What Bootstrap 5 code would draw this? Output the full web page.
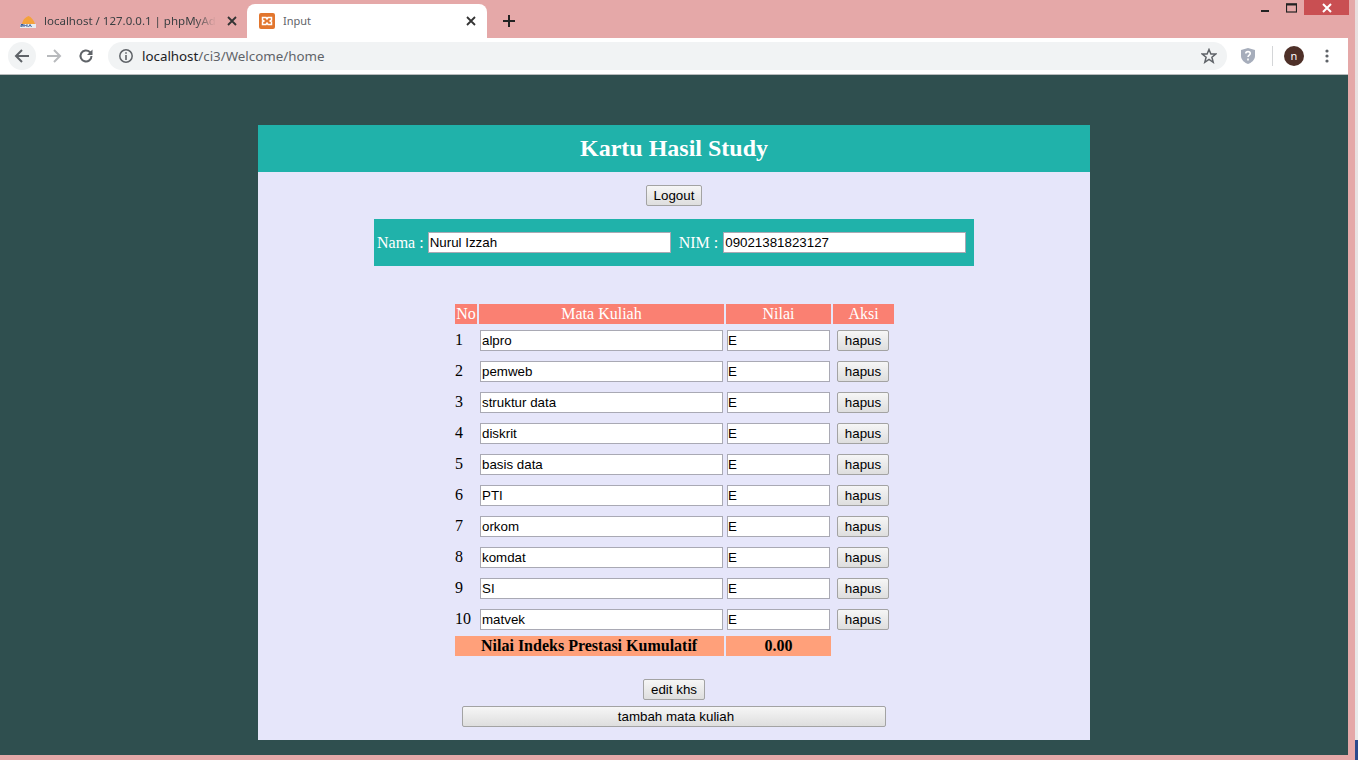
<!DOCTYPE html>
<html lang="id">
<head>
<meta charset="utf-8">
<title>Input</title>
<link href="https://cdn.jsdelivr.net/npm/bootstrap@5.3.0/dist/css/bootstrap.min.css" rel="stylesheet">
<style>
html,body{height:760px;overflow:hidden;background:#e5a8a8}
.shell{width:1358px;height:760px}
.win{width:1355px;height:760px;background:#e5a8a8}
.desk{width:3px;height:760px;background:linear-gradient(#e9dede 0,#e9e9e9 740px,#2b4a8c 740px)}
.tabstrip{height:38px;width:1348px;position:relative;font:11.5px "Noto Sans",sans-serif;color:#3c4043}
.tab-a{width:247px;padding:0 7px 1px 20px;height:34px;margin-top:4px}
.tab-b{width:240px;height:34px;margin-top:4px;padding:0 8px 1px 12px;background:#fff;border-radius:8px 8px 0 0}
.tab-title{flex:1;white-space:nowrap;overflow:hidden;margin-left:8px}
.tab-fade{-webkit-mask-image:linear-gradient(90deg,#000 88%,transparent)}
.tab-b .tab-title{color:#5f6368;font-size:11px}
.newtab{margin-left:13px;margin-top:4px}
.winctl{position:absolute;top:0;right:-1px;height:15px}
.winctl span{display:flex;align-items:center;justify-content:center;height:15px}
.w-close{width:45px;background:#c94f52}
.w-btn{width:26px}
.toolbar{height:37px;width:1348px;background:#fff;border-bottom:1px solid #b9bcbd;padding:4px 0 4px 8px}
.nav-round{width:28px;height:28px;border-radius:50%}
.nav-on{background:#f1f3f4}
.omni{width:1119px;height:28px;border-radius:14px;background:#f1f3f4;margin-left:8px;padding:0 10px;font:13.33px "Noto Sans",sans-serif;color:#202124}
.omni em{font-style:normal;color:#5f6368}
.sep{width:1px;height:20px;background:#d4d6d8}
.avatar{width:20px;height:20px;border-radius:50%;background:#4e3028;color:#fff;font:11px/20px "Noto Sans",sans-serif;text-align:center}
.pagearea{width:1348px;height:680px;background:#2f4f4f;padding-top:50px}
.panel{width:832px;height:615px;margin-left:258px;background:#e6e6fa;font-family:"Liberation Serif",serif;font-size:16px;color:#000}
.banner{height:47px;background:#20b2aa;color:#fff;font-size:24px;font-weight:700;line-height:47px;text-align:center;margin:0}
.old-btn{height:21px;padding:0;border:1px solid #a3a3a3;border-radius:2px;background:linear-gradient(#f6f6f6,#dedede);font:13.33px/18px "Liberation Sans",sans-serif;color:#000;display:block}
.old-in{height:21px;border:1px solid #a9a9b4;background:#fff;padding:0 1px 1px;font:13.33px "Liberation Sans",sans-serif;color:#000;display:block;outline:0;border-radius:0}
.logout{width:56px;margin:13px 0 13px 388px}
.idbar{width:600px;height:47px;margin-left:116px;background:#20b2aa;color:#fff;padding-left:3px}
.idbar .old-in{width:243px}
.idbar label{white-space:nowrap}
.krs{border-collapse:separate;border-spacing:2px;margin:36px 0 0 195px;table-layout:fixed;width:443px}
.krs th{background:#fa8072;color:#fff;font-weight:400;height:20px;line-height:20px;text-align:center;padding:0}
.krs td{padding:4px 0 4px 1px;height:29px;vertical-align:top}
.krs td.num{padding:4px 0 0;line-height:20px}
.krs .old-in.m{width:243px}
.krs .old-in.n{width:103px;padding-left:0}
.krs .old-btn{width:52px;margin-left:3px}
.krs td.tot{background:#ffa07a;font-weight:700;height:20px;line-height:20px;padding:0;text-align:center}
.krs td.tot.lbl{text-align:left;padding-left:26px}
.krs td.blank{height:20px;padding:0}
.edit-btn{width:62px;margin:21px 0 6px 385px}
.add-btn{width:424px;margin-left:204px;padding-left:4px}
</style>
</head>
<body class="m-0">
<div class="shell d-flex">
<div class="win d-flex flex-column">
  <div class="tabstrip d-flex align-items-start">
    <div class="tab-a d-flex align-items-center">
      <svg width="16" height="16" viewBox="0 0 16 16"><path d="M2 11C3 6 6 4 8.500 3C11 4 14 7 15 11Z" fill="#f4a23c"/><rect x="0" y="11" width="16" height="4" fill="#e8ecf2"/><path d="M1 14V11.500H3V13H1M4 14V11.500L5.500 13L7 11.500V14M8.500 14L10 11.500L11.500 14" fill="none" stroke="#2a4f8f" stroke-width=".9"/></svg>
      <span class="tab-title tab-fade">localhost / 127.0.0.1 | phpMyAdmin</span>
      <svg class="ms-2" width="16" height="16" viewBox="0 0 16 16"><path d="M4 4L12 12M12 4L4 12" stroke="#333" stroke-width="1.800"/></svg>
    </div>
    <div class="tab-b d-flex align-items-center">
      <svg width="16" height="16" viewBox="0 0 16 16"><rect width="16" height="16" rx="2" fill="#e2762e"/><path d="M3.500 4.500H7L8 6L9 4.500H12.500V7L11 8L12.500 9V11.500H9L8 10L7 11.500H3.500V9L5 8L3.500 7Z" fill="none" stroke="#fff" stroke-width="1.500"/></svg>
      <span class="tab-title">Input</span>
      <svg width="16" height="16" viewBox="0 0 16 16"><path d="M4 4L12 12M12 4L4 12" stroke="#333" stroke-width="1.800"/></svg>
    </div>
    <svg class="newtab" width="18" height="34" viewBox="0 0 18 34"><path d="M9 11V23M3 17H15" stroke="#222" stroke-width="2"/></svg>
    <div class="winctl d-flex">
      <span class="w-btn"><svg width="10" height="10" viewBox="0 0 10 10"><path d="M1 8H9" stroke="#222" stroke-width="2"/></svg></span>
      <span class="w-btn"><svg width="11" height="10" viewBox="0 0 11 10"><rect x=".5" y="1" width="10" height="8" fill="none" stroke="#222" stroke-width="1.200"/><path d="M0 1.500H11" stroke="#222" stroke-width="2"/></svg></span>
      <span class="w-close"><svg width="12" height="12" viewBox="0 0 12 12"><path d="M2 2L10 10M10 2L2 10" stroke="#fff" stroke-width="2"/></svg></span>
    </div>
  </div>
  <div class="toolbar d-flex align-items-center">
    <span class="nav-round nav-on d-flex align-items-center justify-content-center"><svg width="16" height="16" viewBox="0 0 16 16"><path d="M15 8H2M8 2L2 8L8 14" fill="none" stroke="#5f6368" stroke-width="2"/></svg></span>
    <span class="nav-round d-flex align-items-center justify-content-center ms-1"><svg width="16" height="16" viewBox="0 0 16 16"><path d="M1 8H14M8 2L14 8L8 14" fill="none" stroke="#b8babd" stroke-width="2"/></svg></span>
    <span class="nav-round d-flex align-items-center justify-content-center ms-1"><svg width="16" height="16" viewBox="0 0 16 16"><path d="M13.500 8A5.500 5.500 0 1 1 11.800 4L13.500 5.700" fill="none" stroke="#5f6368" stroke-width="2"/><path d="M14.500 1.500V7H9Z" fill="#5f6368"/></svg></span>
    <div class="omni d-flex align-items-center">
      <svg width="16" height="16" viewBox="0 0 16 16"><circle cx="8" cy="8" r="6.200" fill="none" stroke="#5f6368" stroke-width="1.500"/><path d="M8 7V12M8 4.200V5.800" stroke="#5f6368" stroke-width="1.600"/></svg>
      <span class="ms-2">localhost<em>/ci3/Welcome/home</em></span>
      <svg class="ms-auto" width="16" height="16" viewBox="0 0 16 16"><path d="M8 1.500L9.900 6H14.800L10.900 9.200L12.200 14.300L8 11.500L3.800 14.300L5.100 9.200L1.200 6H6.100Z" fill="none" stroke="#5f6368" stroke-width="1.500"/></svg>
    </div>
    <svg style="margin-left:13px" width="16" height="18" viewBox="0 0 16 18"><path d="M8 1L15 3V9C15 13 11 16 8 17C5 16 1 13 1 9V3Z" fill="#a6adbb"/><path d="M5.800 6.500C5.800 4 10.200 4 10.200 6.500C10.200 8.200 8 8 8 10M8 11.500V13.500" fill="none" stroke="#fff" stroke-width="1.600"/></svg>
    <span class="sep" style="margin-left:16px"></span>
    <span class="avatar" style="margin-left:11px">n</span>
    <svg style="margin-left:21px" width="4" height="14" viewBox="0 0 4 14"><circle cx="2" cy="2" r="1.600" fill="#5f6368"/><circle cx="2" cy="7" r="1.600" fill="#5f6368"/><circle cx="2" cy="12" r="1.600" fill="#5f6368"/></svg>
  </div>
  <div class="pagearea">
    <div class="panel">
      <h1 class="banner">Kartu Hasil Study</h1>
      <button class="old-btn logout" type="button">Logout</button>
      <div class="idbar d-flex align-items-center">
        <label for="nama">Nama :</label>
        <input id="nama" class="old-in" style="margin-left:4px" value="Nurul Izzah">
        <label for="nim" style="margin-left:8px">NIM :</label>
        <input id="nim" class="old-in" style="margin-left:5px" value="09021381823127">
      </div>
      <table class="krs">
        <colgroup><col style="width:22px"><col style="width:245px"><col style="width:105px"><col style="width:61px"></colgroup>
        <thead><tr><th>No</th><th>Mata Kuliah</th><th>Nilai</th><th>Aksi</th></tr></thead>
        <tbody>
          <tr><td class="num">1</td><td><input class="old-in m" value="alpro"></td><td><input class="old-in n" value="E"></td><td><button class="old-btn" type="button">hapus</button></td></tr>
          <tr><td class="num">2</td><td><input class="old-in m" value="pemweb"></td><td><input class="old-in n" value="E"></td><td><button class="old-btn" type="button">hapus</button></td></tr>
          <tr><td class="num">3</td><td><input class="old-in m" value="struktur data"></td><td><input class="old-in n" value="E"></td><td><button class="old-btn" type="button">hapus</button></td></tr>
          <tr><td class="num">4</td><td><input class="old-in m" value="diskrit"></td><td><input class="old-in n" value="E"></td><td><button class="old-btn" type="button">hapus</button></td></tr>
          <tr><td class="num">5</td><td><input class="old-in m" value="basis data"></td><td><input class="old-in n" value="E"></td><td><button class="old-btn" type="button">hapus</button></td></tr>
          <tr><td class="num">6</td><td><input class="old-in m" value="PTI"></td><td><input class="old-in n" value="E"></td><td><button class="old-btn" type="button">hapus</button></td></tr>
          <tr><td class="num">7</td><td><input class="old-in m" value="orkom"></td><td><input class="old-in n" value="E"></td><td><button class="old-btn" type="button">hapus</button></td></tr>
          <tr><td class="num">8</td><td><input class="old-in m" value="komdat"></td><td><input class="old-in n" value="E"></td><td><button class="old-btn" type="button">hapus</button></td></tr>
          <tr><td class="num">9</td><td><input class="old-in m" value="SI"></td><td><input class="old-in n" value="E"></td><td><button class="old-btn" type="button">hapus</button></td></tr>
          <tr><td class="num">10</td><td><input class="old-in m" value="matvek"></td><td><input class="old-in n" value="E"></td><td><button class="old-btn" type="button">hapus</button></td></tr>
          <tr><td class="tot lbl" colspan="2">Nilai Indeks Prestasi Kumulatif</td><td class="tot">0.00</td><td class="blank"></td></tr>
        </tbody>
      </table>
      <button class="old-btn edit-btn" type="button">edit khs</button>
      <button class="old-btn add-btn" type="button">tambah mata kuliah</button>
    </div>
  </div>
</div>
<div class="desk"></div>
</div>
<script src="https://cdn.jsdelivr.net/npm/bootstrap@5.3.0/dist/js/bootstrap.bundle.min.js"></script>
</body>
</html>
